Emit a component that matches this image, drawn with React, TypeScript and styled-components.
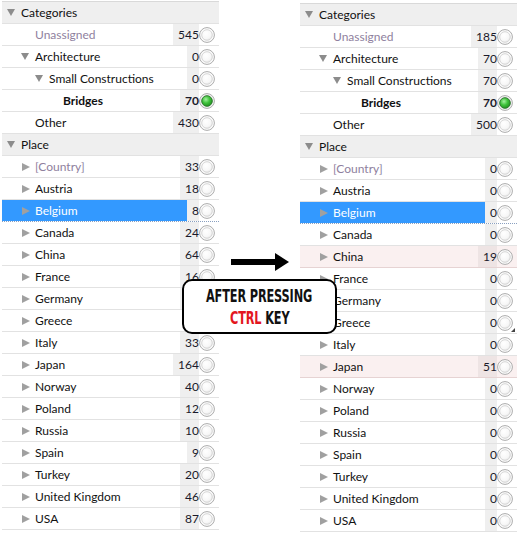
import React, { useId } from "react";
import styled, { createGlobalStyle } from "styled-components";

const GlobalStyle = createGlobalStyle`
  html, body {
    margin: 0;
    padding: 0;
    background: #ffffff;
  }
  body {
    font-family: Lato, "Noto Sans", "DejaVu Sans", sans-serif;
    font-size: 12px;
    color: #111;
  }
`;

type Item = {
  label: string;
  level?: number;
  count?: number;
  header?: boolean;
  arrow?: "down" | "right";
  muted?: boolean;
  bold?: boolean;
  checked?: boolean;
  selected?: boolean;
  hot?: boolean;
  grip?: boolean;
};

const SPage = styled.div`
  position: relative;
  display: flex;
  align-items: flex-start;
  padding: 1px 0 0 2px;
  width: 519px;
  height: 533px;
  box-sizing: border-box;
`;

const SPanel = styled.div<{ $drop?: number }>`
  width: 217px;
  margin-top: ${(p) => p.$drop || 0}px;
  border-top: 1px solid #d9d9d9;
`;

const SGutter = styled.div`
  width: 81px;
  flex-shrink: 0;
`;

const SRow = styled.div<{ $header?: boolean; $hot?: boolean; $selected?: boolean }>`
  display: flex;
  align-items: stretch;
  height: 21px;
  border-bottom: 1px ${(p) => (p.$selected ? "dotted #8aa0c0" : "solid")}
    ${(p) => (p.$selected ? "" : p.$hot ? "#e6d3d3" : "#e2e2e2")};
  background: ${(p) => (p.$header ? "#efefef" : p.$hot ? "#faf0f0" : "#fff")};
`;

const SLabel = styled.div<{ $indent: number; $muted?: boolean; $bold?: boolean; $selected?: boolean }>`
  flex: 1;
  display: flex;
  align-items: center;
  position: relative;
  padding-left: ${(p) => p.$indent}px;
  white-space: nowrap;
  color: ${(p) => (p.$selected ? "#fff" : p.$muted ? "#8f7f9e" : "#111")};
  font-weight: ${(p) => (p.$bold ? 700 : 400)};
  background: ${(p) => (p.$selected ? "#3399ff" : "transparent")};
`;

const STri = styled.svg`
  position: absolute;
  left: ${(p) => p.x}px;
  top: 7px;
`;

const SCount = styled.div<{ $bold?: boolean; $hot?: boolean }>`
  display: flex;
  align-items: center;
  padding: 0 0 0 5px;
  background: ${(p) => (p.$hot ? "#eee4e4" : "#efefef")};
  font-weight: ${(p) => (p.$bold ? 700 : 400)};
  color: #1a1a2a;
`;

const SRadio = styled.div`
  position: relative;
  width: 16px;
  margin-right: 4px;
  display: flex;
  align-items: center;
`;

const SGrip = styled.div`
  position: absolute;
  right: -2px;
  bottom: 1px;
  width: 0;
  height: 0;
  border-left: 4px solid transparent;
  border-bottom: 4px solid #444;
`;

const SArrow = styled.svg`
  position: absolute;
  left: 231px;
  top: 253px;
`;

const SCallout = styled.div`
  position: absolute;
  left: 182px;
  top: 279px;
  width: 155px;
  height: 55px;
  box-sizing: border-box;
  border: 2.5px solid #000;
  border-radius: 10px;
  background: #fff;
  display: flex;
  flex-direction: column;
  align-items: center;
  justify-content: center;
`;

const SCallLine = styled.div`
  font-family: "DejaVu Sans", sans-serif;
  font-stretch: condensed;
  font-weight: 700;
  font-size: 18.5px;
  line-height: 22px;
  letter-spacing: -0.2px;
  color: #111;
  transform: scaleX(0.68);
  white-space: nowrap;
`;

const SRed = styled.span`
  color: #e3161e;
`;

const Triangle = ({ dir, x }: { dir: "down" | "right"; x: number }) =>
  dir === "down" ? (
    <STri x={x} width="8" height="7" viewBox="0 0 8 7">
      <polygon points="0,0 8,0 4,7" fill="#8c8c8c" />
    </STri>
  ) : (
    <STri x={x} width="8" height="8" viewBox="0 0 8 8">
      <polygon points="0,0 8,4 0,8" fill="#a0a0a0" />
    </STri>
  );

const Radio = ({ on }: { on?: boolean }) => {
  const id = useId();
  return (
    <svg width="16" height="16" viewBox="0 0 16 16">
      <defs>
        <radialGradient id={id} cx="0.4" cy="0.35" r="0.7">
          {on ? (
            <>
              <stop offset="0" stopColor="#a4f0a0" />
              <stop offset="0.5" stopColor="#3ec23a" />
              <stop offset="1" stopColor="#1d8a1d" />
            </>
          ) : (
            <>
              <stop offset="0" stopColor="#ffffff" />
              <stop offset="0.7" stopColor="#f7f7f7" />
              <stop offset="1" stopColor="#e2e2e2" />
            </>
          )}
        </radialGradient>
      </defs>
      <circle cx="8" cy="8" r="7.4" fill={on ? "#f4f4f4" : "#fdfdfd"} stroke="#ababab" strokeWidth="1" />
      <circle cx="8" cy="8" r="5.3" fill={`url(#${id})`} stroke={on ? "#2f7a2f" : "#d6d6d6"} strokeWidth="1" />
    </svg>
  );
};

const TreeRow = ({ item }: { item: Item }) => {
  const level = item.level || 0;
  const indent = item.header ? 19 : 19 + level * 14;
  return (
    <SRow $header={item.header} $hot={item.hot} $selected={item.selected}>
      <SLabel $indent={indent} $muted={item.muted} $bold={item.bold} $selected={item.selected}>
        {item.arrow && <Triangle dir={item.arrow} x={indent - (item.arrow === "down" ? 14 : 13)} />}
        {item.label}
      </SLabel>
      {!item.header && (
        <>
          <SCount $bold={item.bold} $hot={item.hot}>
            {item.count}
          </SCount>
          <SRadio>
            <Radio on={item.checked} />
            {item.grip && <SGrip />}
          </SRadio>
        </>
      )}
    </SRow>
  );
};

const countries = [
  "Austria",
  "Belgium",
  "Canada",
  "China",
  "France",
  "Germany",
  "Greece",
  "Italy",
  "Japan",
  "Norway",
  "Poland",
  "Russia",
  "Spain",
  "Turkey",
  "United Kingdom",
  "USA",
];

const build = (cat: number[], place: number[], extra: Partial<Record<string, Partial<Item>>>): Item[] => [
  { label: "Categories", header: true, arrow: "down" },
  { label: "Unassigned", level: 1, count: cat[0], muted: true },
  { label: "Architecture", level: 1, count: cat[1], arrow: "down" },
  { label: "Small Constructions", level: 2, count: cat[2], arrow: "down" },
  { label: "Bridges", level: 3, count: cat[3], bold: true, checked: true },
  { label: "Other", level: 1, count: cat[4] },
  { label: "Place", header: true, arrow: "down" },
  { label: "[Country]", level: 1, count: place[0], arrow: "right", muted: true },
  ...countries.map((c, i) => ({
    label: c,
    level: 1,
    count: place[i + 1],
    arrow: "right" as const,
    ...(extra[c] || {}),
  })),
];

const before = build(
  [545, 0, 0, 70, 430],
  [33, 18, 8, 24, 64, 16, 12, 9, 33, 164, 40, 12, 10, 9, 20, 46, 87],
  { Belgium: { selected: true } }
);

const after = build(
  [185, 70, 70, 70, 500],
  [0, 0, 0, 0, 19, 0, 0, 0, 0, 51, 0, 0, 0, 0, 0, 0, 0],
  {
    Belgium: { selected: true },
    China: { hot: true },
    Japan: { hot: true },
    Greece: { grip: true },
  }
);

const App = () => (
  <>
    <GlobalStyle />
    <SPage>
      <SPanel>
        {before.map((it) => (
          <TreeRow key={it.label} item={it} />
        ))}
      </SPanel>
      <SGutter />
      <SPanel $drop={2}>
        {after.map((it) => (
          <TreeRow key={it.label} item={it} />
        ))}
      </SPanel>
      <SArrow width="58" height="18" viewBox="0 0 58 18">
        <rect x="0" y="6" width="45" height="6" fill="#000" />
        <polygon points="44,0 58,9 44,18" fill="#000" />
      </SArrow>
      <SCallout>
        <SCallLine>AFTER PRESSING</SCallLine>
        <SCallLine>
          <SRed>CTRL</SRed> KEY
        </SCallLine>
      </SCallout>
    </SPage>
  </>
);

export default App;
